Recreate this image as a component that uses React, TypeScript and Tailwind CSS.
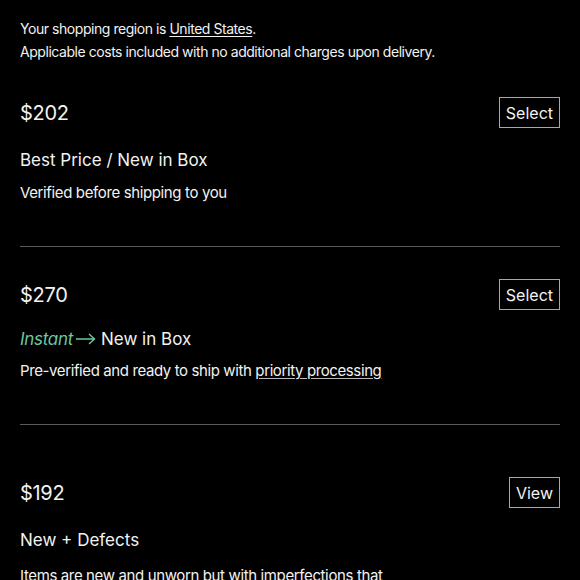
import React from 'react'

function PriceRow({ price, action }: { price: string; action: string }) {
  return (
    <div className="flex items-center justify-between h-[31px]">
      <span className="text-[20px] leading-none text-[#f2f2f2] tracking-[-0.3px]">{price}</span>
      <button className="h-[31px] px-[6px] border border-[#a8a8a8] text-[16px] leading-none text-[#f2f2f2]">
        {action}
      </button>
    </div>
  )
}

export default function App() {
  return (
    <div
      className="w-[580px] h-[580px] overflow-hidden bg-black text-[#f2f2f2] px-5"
      style={{ fontFamily: 'Inter, "Liberation Sans", sans-serif' }}
    >
      <div className="pt-[17px] text-[14px] leading-[23px] tracking-[-0.45px]">
        <p>
          Your shopping region is <span className="underline underline-offset-2">United States</span>.
        </p>
        <p>Applicable costs included with no additional charges upon delivery.</p>
      </div>

      {/* Best price */}
      <div className="mt-[34px]">
        <PriceRow price="$202" action="Select" />
        <p className="mt-[20px] text-[17px] leading-[24px]">Best Price / New in Box</p>
        <p className="mt-[10px] text-[15px] leading-[22px] tracking-[-0.37px]">Verified before shipping to you</p>
      </div>
      <div className="mt-[42px] h-px bg-[#5a5a5a]" />

      {/* Instant */}
      <div className="mt-[32px]">
        <PriceRow price="$270" action="Select" />
        <p className="mt-[17px] flex items-center text-[17px] leading-[24px]">
          <span className="italic text-[#6cc7a1] tracking-[-0.3px]">Instant</span>
          <svg width="20" height="12" viewBox="0 0 20 12" className="ml-[3px] mr-[5px]" fill="none" stroke="#6cc7a1" strokeWidth="1.4">
            <path d="M0 6h18.5M13 1l5.5 5-5.5 5" />
          </svg>
          New in Box
        </p>
        <p className="mt-[9px] text-[15px] leading-[22px] tracking-[-0.39px]">
          Pre-verified and ready to ship with{' '}
          <span className="underline underline-offset-2 decoration-[#bbbbbb]">priority processing</span>
        </p>
      </div>
      <div className="mt-[42px] h-px bg-[#5a5a5a]" />

      {/* Defects */}
      <div className="mt-[52px]">
        <PriceRow price="$192" action="View" />
        <p className="mt-[20px] text-[17px] leading-[24px]">New + Defects</p>
        <p className="mt-[13px] text-[15px] leading-[22px] tracking-[-0.37px]">
          Items are new and unworn but with imperfections that
        </p>
      </div>
    </div>
  )
}
